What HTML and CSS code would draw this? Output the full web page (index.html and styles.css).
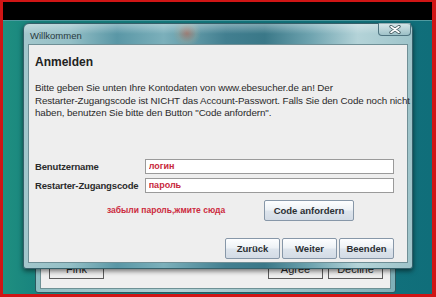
FILE: index.html
```html
<!DOCTYPE html>
<html lang="de">
<head>
    <meta charset="UTF-8">
    <title>Willkommen</title>
    <link rel="stylesheet" href="styles.css">
</head>
<body>
    <div class="screen">
        <div class="topbar"></div>
        <div class="desktop">

            <!-- window underneath the login dialog -->
            <div class="window back-window">
                <div class="back-body">
                    <div class="back-buttons">
                        <button class="old-button">Fink</button>
                        <span class="spacer"></span>
                        <button class="old-button">Agree</button>
                        <button class="old-button">Decline</button>
                    </div>
                </div>
            </div>

            <div class="window dialog">
                <div class="titlebar">
                    <span class="title">Willkommen</span>
                    <span class="close-button">
                        <svg width="12" height="9" viewBox="0 0 12 9">
                            <path d="M2 1.5 L10 7.5 M10 1.5 L2 7.5" stroke="#3c5258" stroke-width="3.2" stroke-linecap="round"/>
                            <path d="M2 1.5 L10 7.5 M10 1.5 L2 7.5" stroke="#ffffff" stroke-width="1.6" stroke-linecap="round"/>
                        </svg>
                    </span>
                </div>

                <div class="content">
                    <h2>Anmelden</h2>
                    <p class="intro">
                        Bitte geben Sie unten Ihre Kontodaten von www.ebesucher.de an! Der<br>
                        Restarter-Zugangscode ist NICHT das Account-Passwort. Falls Sie den Code noch nicht<br>
                        haben, benutzen Sie bitte den Button "Code anfordern".
                    </p>

                    <div class="login-form">
                        <div class="form-row">
                            <label for="user">Benutzername</label>
                            <input type="text" id="user" value="логин">
                        </div>
                        <div class="form-row">
                            <label for="code">Restarter-Zugangscode</label>
                            <input type="text" id="code" value="пароль">
                        </div>
                    </div>

                    <div class="code-row">
                        <span class="forgot">забыли пароль,жмите сюда</span>
                        <button class="button code-button">Code anfordern</button>
                    </div>

                    <div class="button-row">
                        <button class="button nav-button">Zurück</button>
                        <button class="button nav-button">Weiter</button>
                        <button class="button nav-button">Beenden</button>
                    </div>
                </div>
            </div>

        </div>
    </div>
</body>
</html>
```

FILE: styles.css
```css
body {
    margin: 0;
    padding: 0;
    font-family: "Liberation Sans", Arial, sans-serif;
    overflow: hidden;
}
.screen {
    width: 436px;
    height: 297px;
    box-sizing: border-box;
    border-style: solid;
    border-color: #cf1515;
    border-width: 2px 4px 3px 3px;
    background-color: #000;
    display: flex;
    flex-direction: column;
}
.topbar {
    height: 18px;
    background-color: #000;
    border-bottom: 1px solid #4f9aa0;
}
.desktop {
    flex: 1;
    position: relative;
    background: linear-gradient(90deg, #1f8f80 0%, #18837e 8%, #147a80 50%, #106e7a 100%);
}
.window {
    position: absolute;
    box-sizing: border-box;
    display: flex;
    flex-direction: column;
}

/* back window, only its bottom edge shows */
.back-window {
    left: 32px;
    top: 98px;
    width: 361px;
    height: 174px;
    border: 1px solid #2c585e;
    border-radius: 0 0 3px 3px;
    background: linear-gradient(90deg, #8ebdc2, #b4d2d6 40%, #7fb0b8 100%);
    padding: 0 4px 3px 4px;
}
.back-body {
    flex: 1;
    background-color: #efefef;
    border: 1px solid #6e9195;
    display: flex;
    flex-direction: column;
    justify-content: flex-end;
    padding: 0 7px 9px 8px;
}
.back-buttons {
    display: flex;
    gap: 5px;
}
.spacer {
    flex: 1;
}
.old-button {
    width: 55px;
    height: 20px;
    border: 1px solid #5c5c5c;
    background-color: #eeeeee;
    font-family: "Liberation Sans", Arial, sans-serif;
    font-size: 11px;
    color: #222;
    padding: 0;
}

/* login dialog */
.dialog {
    left: 20px;
    top: 2px;
    width: 390px;
    height: 246px;
    border: 1px solid #35606a;
    border-radius: 6px 6px 3px 3px;
    padding: 0 4px 5px 4px;
    background:
        linear-gradient(180deg, rgba(255,255,255,0.35) 0px, rgba(255,255,255,0) 10px),
        radial-gradient(circle at 163px 9px, rgba(160,120,110,0.9) 0, rgba(150,160,150,0.4) 9px, rgba(0,0,0,0) 14px),
        linear-gradient(90deg, #a3c7cc 0%, #94bfc6 12%, #5a97a6 24%, #7cb0bb 36%, #427f90 52%, #3a7888 62%, #6fa4b0 74%, #b4d3d8 86%, #9ec4ca 100%);
    box-shadow: 0 2px 5px rgba(0, 0, 0, 0.55);
}
.titlebar {
    height: 20px;
    display: flex;
    align-items: center;
}
.title {
    font-size: 9.5px;
    color: #2a3a3e;
    padding-left: 2px;
    margin-top: 2px;
}
.close-button {
    margin-left: auto;
    margin-right: -3px;
    align-self: flex-start;
    margin-top: -1px;
    width: 33px;
    height: 13px;
    box-sizing: border-box;
    border: 1px solid #4f7480;
    border-top: none;
    border-radius: 0 0 4px 4px;
    background: linear-gradient(180deg, rgba(230,240,242,0.55), rgba(150,185,192,0.45));
    display: flex;
    align-items: center;
    justify-content: center;
}
.content {
    flex: 1;
    background-color: #eeeeee;
    border: 1px solid #6f8f96;
    padding: 9px 13px 3px 6px;
    display: flex;
    flex-direction: column;
    color: #222;
}
.content h2 {
    margin: 0;
    font-size: 12px;
    line-height: 16px;
    font-weight: bold;
    color: #222;
}
.intro {
    margin: 12px 0 0 0;
    font-size: 9.8px;
    line-height: 12.5px;
    letter-spacing: -0.1px;
    white-space: nowrap;
    color: #2a2a2a;
}
.login-form {
    margin-top: 39px;
    display: flex;
    flex-direction: column;
    gap: 4px;
}
.form-row {
    display: flex;
    align-items: center;
}
.form-row label {
    width: 110px;
    font-size: 9.5px;
    font-weight: bold;
    letter-spacing: -0.15px;
    white-space: nowrap;
    color: #2a2a2a;
}
.form-row input {
    width: 250px;
    height: 15px;
    box-sizing: border-box;
    border: 1px solid #9a9a9a;
    background-color: #fff;
    padding: 0 3px;
    font-family: "Liberation Sans", Arial, sans-serif;
    font-size: 9px;
    font-weight: bold;
    color: #c8283c;
}
.code-row {
    margin-top: 7px;
    padding-left: 72px;
    display: flex;
    align-items: center;
}
.forgot {
    width: 157px;
    font-size: 8.5px;
    font-weight: bold;
    white-space: nowrap;
    color: #cc2a40;
}
.button {
    height: 21px;
    box-sizing: border-box;
    border: 1px solid #8797a8;
    border-radius: 2px;
    background: linear-gradient(180deg, #fdfeff 0%, #eef2f6 45%, #dde4ec 55%, #d3dbe5 100%);
    font-family: "Liberation Sans", Arial, sans-serif;
    font-size: 9.5px;
    font-weight: bold;
    color: #2b2f33;
    padding: 0;
}
.code-button {
    width: 90px;
}
.button-row {
    margin-top: auto;
    display: flex;
    justify-content: flex-end;
    gap: 2px;
}
.nav-button {
    width: 55px;
}
```
